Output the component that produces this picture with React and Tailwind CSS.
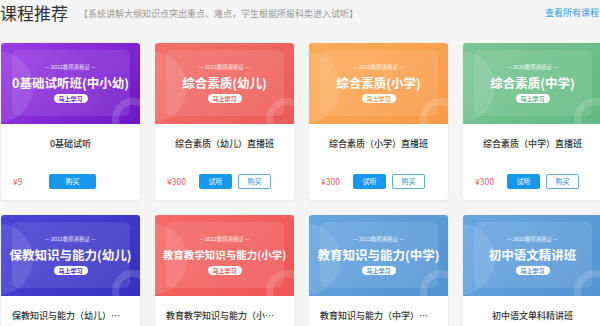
import React from 'react';

const courses = [
  { banner: '0基础试听班(中小幼)', title: '0基础试听', price: '¥9', from: '#9b3be6', to: '#6d17c4', text: '#7a1fd0', trial: false },
  { banner: '综合素质(幼儿)', title: '综合素质（幼儿）直播班', price: '¥300', from: '#f2716a', to: '#ec5a57', text: '#ee625c', trial: true },
  { banner: '综合素质(小学)', title: '综合素质（小学）直播班', price: '¥300', from: '#fbab5a', to: '#f89a47', text: '#f79b45', trial: true },
  { banner: '综合素质(中学)', title: '综合素质（中学）直播班', price: '¥300', from: '#79c695', to: '#63b983', text: '#5fb47f', trial: true },
  { banner: '保教知识与能力(幼儿)', title: '保教知识与能力（幼儿）直播班', price: '¥300', from: '#4b43d6', to: '#3630c0', text: '#3d36c6', trial: true },
  { banner: '教育教学知识与能力(小学)', title: '教育教学知识与能力（小学）直播班', price: '¥300', from: '#f56a66', to: '#ef5555', text: '#ef5757', trial: true, small: true },
  { banner: '教育知识与能力(中学)', title: '教育知识与能力（中学）直播班', price: '¥300', from: '#67a6df', to: '#5493d2', text: '#5595d4', trial: true },
  { banner: '初中语文精讲班', title: '初中语文单科精讲班', price: '¥300', from: '#67a6df', to: '#5493d2', text: '#5595d4', trial: true },
];

function Banner({ c }) {
  return (
    <div
      className="relative h-[81px] overflow-hidden rounded-t-[3px]"
      style={{ background: `linear-gradient(135deg, ${c.from}, ${c.to})` }}
    >
      {/* decorative circles */}
      <div className="absolute left-[-40px] top-[8px] w-[72px] h-[72px] rounded-full bg-white/10" />
      <div className="absolute right-[-14px] bottom-[-16px] w-[42px] h-[42px] rounded-full border-[7px] border-white/15" />
      {/* inner panel */}
      <div className="absolute left-[11px] right-[10px] top-[7px] bottom-[8px] rounded-[6px] bg-white/10" />
      <div className="relative flex flex-col items-center pt-[20px]">
        <div className="text-[6px] leading-[8px] text-white/85 scale-90">— 2022教师资格证 —</div>
        <div className={`mt-[4px] font-bold text-white leading-[16px] whitespace-nowrap ${c.small ? 'text-[10.5px]' : 'text-[12.5px]'}`}>
          {c.banner}
        </div>
        <div
          className="mt-[3px] w-[34px] h-[9px] rounded-full bg-white flex items-center justify-center text-[6px] font-bold leading-none"
          style={{ color: c.text }}
        >
          马上学习
        </div>
      </div>
    </div>
  );
}

function Card({ c }) {
  return (
    <div className="w-[139px] shrink-0 bg-white rounded-[3px] shadow-[0_1px_3px_rgba(0,0,0,0.06)]">
      <Banner c={c} />
      <div className="h-[40px] px-[11px] flex items-center justify-center">
        <div className="truncate text-[9px] font-medium text-[#333]">{c.title}</div>
      </div>
      <div className="mt-[10px] h-[15px] flex items-center pl-[12px]">
        <span className="w-[32px] text-[8.5px] text-[#e0605a]">{c.price}</span>
        {c.trial ? (
          <div className="flex gap-[6px]">
            <button className="w-[33px] h-[15px] rounded-[2px] bg-[#1897ee] text-white text-[7px] leading-none">试听</button>
            <button className="w-[33px] h-[15px] rounded-[2px] border border-[#62ade8] bg-white text-[#2b8ed8] text-[7px] leading-none">购买</button>
          </div>
        ) : (
          <button className="ml-[4px] w-[47px] h-[15px] rounded-[2px] bg-[#1897ee] text-white text-[7px] leading-none">购买</button>
        )}
      </div>
      <div className="h-[11px]" />
    </div>
  );
}

export default function App() {
  return (
    <div className="w-[600px] h-[326px] overflow-hidden bg-[#f5f5f5] font-['Noto_Sans_CJK_SC','Noto_Sans',sans-serif]">
      <div className="w-[606px] h-[43px] flex items-start pt-[2px]">
        <h2 className="text-[17px] leading-[22px] text-[#333]">课程推荐</h2>
        <p className="ml-[11px] mt-[6px] text-[9px] leading-[12px] text-[#999]">
          【系统讲解大纲知识点突出重点、难点，学生根据所报科类进入试听】
        </p>
        <a className="ml-auto mt-[5px] text-[9px] leading-[12px] text-[#2b9be6]">查看所有课程 &gt;</a>
      </div>
      <div className="pl-[1px] flex flex-col gap-[15px]">
        <div className="flex gap-[15px]">
          {courses.slice(0, 4).map((c) => <Card key={c.banner} c={c} />)}
        </div>
        <div className="flex gap-[15px]">
          {courses.slice(4).map((c) => <Card key={c.banner} c={c} />)}
        </div>
      </div>
    </div>
  );
}
